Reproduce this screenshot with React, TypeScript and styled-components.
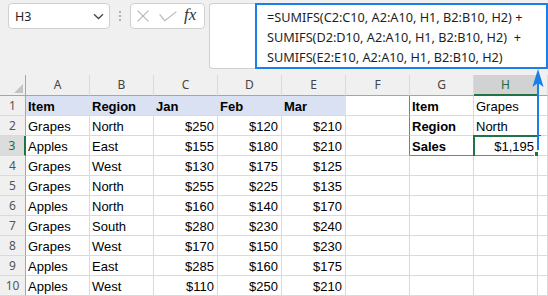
import React from "react";
import styled, { createGlobalStyle, css } from "styled-components";

const GlobalStyle = createGlobalStyle`
  html, body { margin: 0; padding: 0; background: #ffffff; }
  body { width: 548px; height: 296px; overflow: hidden; }
  * { box-sizing: border-box; }
`;

const GRID = "#dadada";
const HEAD_BG = "#f0f0f0";
const HEAD_LINE = "#a6a6a6";
const GREEN = "#217346";
const BLUE = "#1a7fe8";
const TABLE_LINE = "#7f7f7f";

const Page = styled.div`
  position: relative;
  width: 548px;
  height: 296px;
  overflow: hidden;
  background: #ffffff;
`;

const Toolbar = styled.div`
  height: 75px;
  background: ${HEAD_BG};
  display: flex;
  align-items: flex-start;
  padding: 3px 0 0 8px;
`;

const NameBox = styled.div`
  width: 102px;
  height: 26px;
  border: 1px solid #d0d0d0;
  border-radius: 4px;
  background: #ffffff;
  display: flex;
  align-items: center;
  justify-content: space-between;
  padding: 0 5px 0 6px;
  font: 12.5px "Noto Sans", "Segoe UI", sans-serif;
  color: #1f1f1f;
`;

const Dots = styled.div`
  width: 20px;
  height: 26px;
  display: flex;
  flex-direction: column;
  align-items: center;
  justify-content: center;
  gap: 1.6px;
  span {
    width: 2px;
    height: 2px;
    border-radius: 1px;
    background: #9a9a9a;
  }
`;

const FxBox = styled.div`
  width: 75px;
  height: 26px;
  border: 1px solid #d0d0d0;
  border-radius: 4px;
  background: #ffffff;
  display: flex;
  align-items: center;
  padding-left: 6px;
`;

const IconSlot = styled.svg<{ $gap: number }>`
  display: block;
  margin-right: ${(p) => p.$gap}px;
  stroke: #b8b8b8;
  fill: none;
`;

const FxLabel = styled.span`
  font: italic 17px "Liberation Serif", "Times New Roman", serif;
  color: #333333;
  line-height: 20px;
  margin-top: -2px;
`;

const FormulaBar = styled.div`
  margin-left: 4px;
  flex: 1;
  height: 66px;
  border: 1px solid #d0d0d0;
  border-right: none;
  border-radius: 4px 0 0 4px;
  background: #ffffff;
  padding-left: 45px;
  display: flex;
`;

const FormulaText = styled.div`
  margin: -1px 0 -1px 0;
  flex: 1;
  height: 66px;
  border: 2px solid ${BLUE};
  background: #ffffff;
  padding: 2px 0 0 10px;
  font: 12.7px "Noto Sans", "Segoe UI", sans-serif;
  line-height: 20px;
  color: #1f1f1f;
  white-space: pre;
`;

const Sheet = styled.div`
  display: grid;
  grid-template-columns: 26px repeat(8, 64px) 1fr;
  grid-template-rows: 21px repeat(10, 20px);
`;

const Corner = styled.div`
  background: ${HEAD_BG};
  border-right: 1px solid ${HEAD_LINE};
  border-bottom: 1px solid ${HEAD_LINE};
  display: flex;
  align-items: flex-end;
  justify-content: flex-end;
  padding: 0 2px 2px 0;
`;

const ColHead = styled.div<{ $sel?: boolean }>`
  background: ${(p) => (p.$sel ? "#d2d2d2" : HEAD_BG)};
  border-right: 1px solid ${GRID};
  border-bottom: ${(p) => (p.$sel ? `2px solid ${GREEN}` : `1px solid ${HEAD_LINE}`)};
  font: 12px "Noto Sans", "Segoe UI", sans-serif;
  color: ${(p) => (p.$sel ? "#1d6b40" : "#444444")};
  text-align: center;
  line-height: 20px;
`;

const RowHead = styled.div<{ $sel?: boolean }>`
  background: ${(p) => (p.$sel ? "#dcdcdc" : HEAD_BG)};
  border-right: ${(p) => (p.$sel ? `2px solid ${GREEN}` : `1px solid ${HEAD_LINE}`)};
  border-bottom: 1px solid ${GRID};
  font: 12px "Noto Sans", "Segoe UI", sans-serif;
  color: ${(p) => (p.$sel ? "#1d6b40" : "#555555")};
  text-align: center;
  line-height: 19px;
`;

type CellProps = {
  $right?: boolean;
  $bold?: boolean;
  $band?: boolean;
  $edgeRight?: boolean;
  $edgeBottom?: boolean;
  $selected?: boolean;
};

const Cell = styled.div<CellProps>`
  position: relative;
  background: ${(p) => (p.$band ? "#d9e1f2" : "#ffffff")};
  border-right: 1px solid
    ${(p) => (p.$edgeRight ? TABLE_LINE : p.$band ? "#d9e1f2" : GRID)};
  border-bottom: 1px solid ${(p) => (p.$edgeBottom ? TABLE_LINE : GRID)};
  padding: 3px 3px 0 2px;
  font: ${(p) => (p.$bold ? "bold" : "normal")} 13px "Liberation Sans", Arial, sans-serif;
  line-height: 16px;
  color: #000000;
  text-align: ${(p) => (p.$right ? "right" : "left")};
  white-space: nowrap;
  ${(p) =>
    p.$selected &&
    css`
      &::before {
        content: "";
        position: absolute;
        left: -1px;
        top: -1px;
        width: 64px;
        height: 22px;
        border: 2px solid ${GREEN};
      }
      &::after {
        content: "";
        position: absolute;
        left: 61px;
        top: 16px;
        width: 5px;
        height: 5px;
        background: ${GREEN};
        outline: 1px solid #ffffff;
      }
    `}
`;

const Arrow = styled.svg`
  position: absolute;
  left: 530px;
  top: 66px;
  overflow: visible;
`;

const COLS = ["A", "B", "C", "D", "E", "F", "G", "H"];

const data: [string, string, string, string, string][] = [
  ["Item", "Region", "Jan", "Feb", "Mar"],
  ["Grapes", "North", "$250", "$120", "$210"],
  ["Apples", "East", "$155", "$180", "$210"],
  ["Grapes", "West", "$130", "$175", "$125"],
  ["Grapes", "North", "$255", "$225", "$135"],
  ["Apples", "North", "$160", "$140", "$170"],
  ["Grapes", "South", "$280", "$230", "$240"],
  ["Grapes", "West", "$170", "$150", "$230"],
  ["Apples", "East", "$285", "$160", "$175"],
  ["Apples", "West", "$110", "$250", "$210"],
];

const side: [string, string, boolean][] = [
  ["Item", "Grapes", false],
  ["Region", "North", false],
  ["Sales", "$1,195", true],
];

const formula =
  "=SUMIFS(C2:C10, A2:A10, H1, B2:B10, H2) +\nSUMIFS(D2:D10, A2:A10, H1, B2:B10, H2)  +\nSUMIFS(E2:E10, A2:A10, H1, B2:B10, H2)";

export default function App() {
  return (
    <Page>
      <GlobalStyle />
      <Toolbar>
        <NameBox>
          <span>H3</span>
          <svg width="11" height="7" viewBox="0 0 11 7">
            <path d="M1 1.2 L5.5 5.5 L10 1.2" stroke="#444" strokeWidth="1.3" fill="none" />
          </svg>
        </NameBox>
        <Dots>
          <span />
          <span />
          <span />
        </Dots>
        <FxBox>
          <IconSlot $gap={10} width="12" height="12" viewBox="0 0 12 12" strokeWidth="1.2">
            <path d="M0.6 0.6 L11.4 11.4 M11.4 0.6 L0.6 11.4" />
          </IconSlot>
          <IconSlot $gap={7} width="18" height="11" viewBox="0 0 18 11" strokeWidth="1.2">
            <path d="M0.6 3.4 L5.8 9.6 L17.4 0.6" />
          </IconSlot>
          <FxLabel>fx</FxLabel>
        </FxBox>
        <FormulaBar>
          <FormulaText>{formula}</FormulaText>
        </FormulaBar>
      </Toolbar>
      <Sheet>
        <Corner>
          <svg width="9" height="9" viewBox="0 0 9 9">
            <path d="M9 0 L9 9 L0 9 Z" fill="#c4c4c4" />
          </svg>
        </Corner>
        {COLS.map((c) => (
          <ColHead key={c} $sel={c === "H"}>
            {c}
          </ColHead>
        ))}
        <ColHead />
        {data.map((row, r) => {
          const s = side[r];
          return (
            <React.Fragment key={r}>
              <RowHead $sel={r === 2}>{r + 1}</RowHead>
              {row.map((v, ci) => (
                <Cell key={ci} $band={r === 0} $bold={r === 0} $right={r > 0 && ci >= 2}>
                  {v}
                </Cell>
              ))}
              <Cell $edgeRight={r < 3} />
              <Cell $bold={!!s} $edgeBottom={r === 2}>
                {s ? s[0] : ""}
              </Cell>
              <Cell $right={!!s && s[2]} $edgeRight={r < 2} $edgeBottom={r === 2} $selected={r === 2}>
                {s ? s[1] : ""}
              </Cell>
              <Cell />
            </React.Fragment>
          );
        })}
      </Sheet>
      <Arrow width="16" height="86" viewBox="0 0 16 86">
        <path d="M8 14 L8 84" stroke={BLUE} strokeWidth="2" />
        <path d="M8 3 L13.6 21 L8 17 L2.4 21 Z" fill={BLUE} />
      </Arrow>
    </Page>
  );
}
